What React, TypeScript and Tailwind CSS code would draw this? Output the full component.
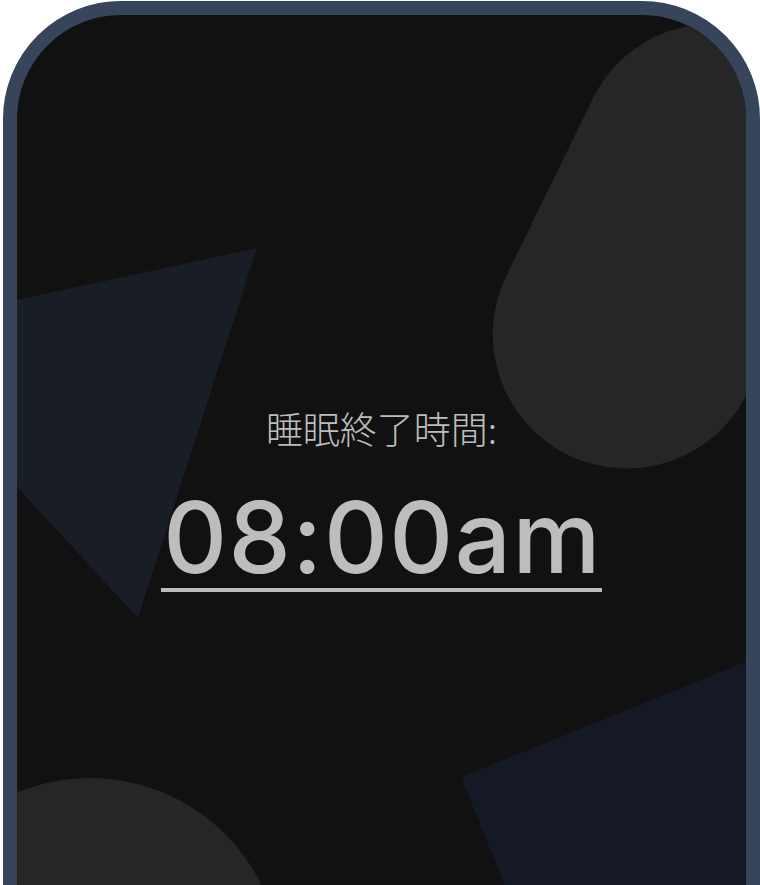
import React from "react";

export default function App() {
  return (
    <div className="w-[760px] h-[885px] overflow-hidden bg-white">
      <div className="relative ml-[3px] mt-[1px] w-[757px] h-[1000px] overflow-hidden rounded-[118px] border-[14px] border-[#36455a] bg-[#111111]">
        <svg className="absolute inset-0" width="100%" height="100%" aria-hidden="true">
          <polygon points="240,233 121,603 -144,316" fill="#191d26" />
          <polygon points="444,762 815,612 965,983 594,1133" fill="#151925" />
          <circle cx="73" cy="954" r="191" fill="#262626" />
          <rect
            x="519"
            y="-1.5"
            width="268"
            height="465"
            rx="134"
            fill="#262626"
            transform="rotate(26 653 231)"
          />
        </svg>
        <div className="relative flex flex-col items-center pt-[395px]">
          <div
            className="text-[37px] leading-none text-[#bdbdbd] font-light"
            style={{ fontFamily: '"Noto Sans CJK JP", "Noto Sans", sans-serif' }}
          >
            睡眠終了時間:
          </div>
          <div
            className="mt-[39px] inline-block border-b-4 border-[#bdbdbd] pl-[2px] text-[99px] font-medium leading-[102px] tracking-[1.5px] text-[#bdbdbd]"
            style={{ fontFamily: 'Inter, "Liberation Sans", sans-serif' }}
          >
            08:00am
          </div>
        </div>
      </div>
    </div>
  );
}
